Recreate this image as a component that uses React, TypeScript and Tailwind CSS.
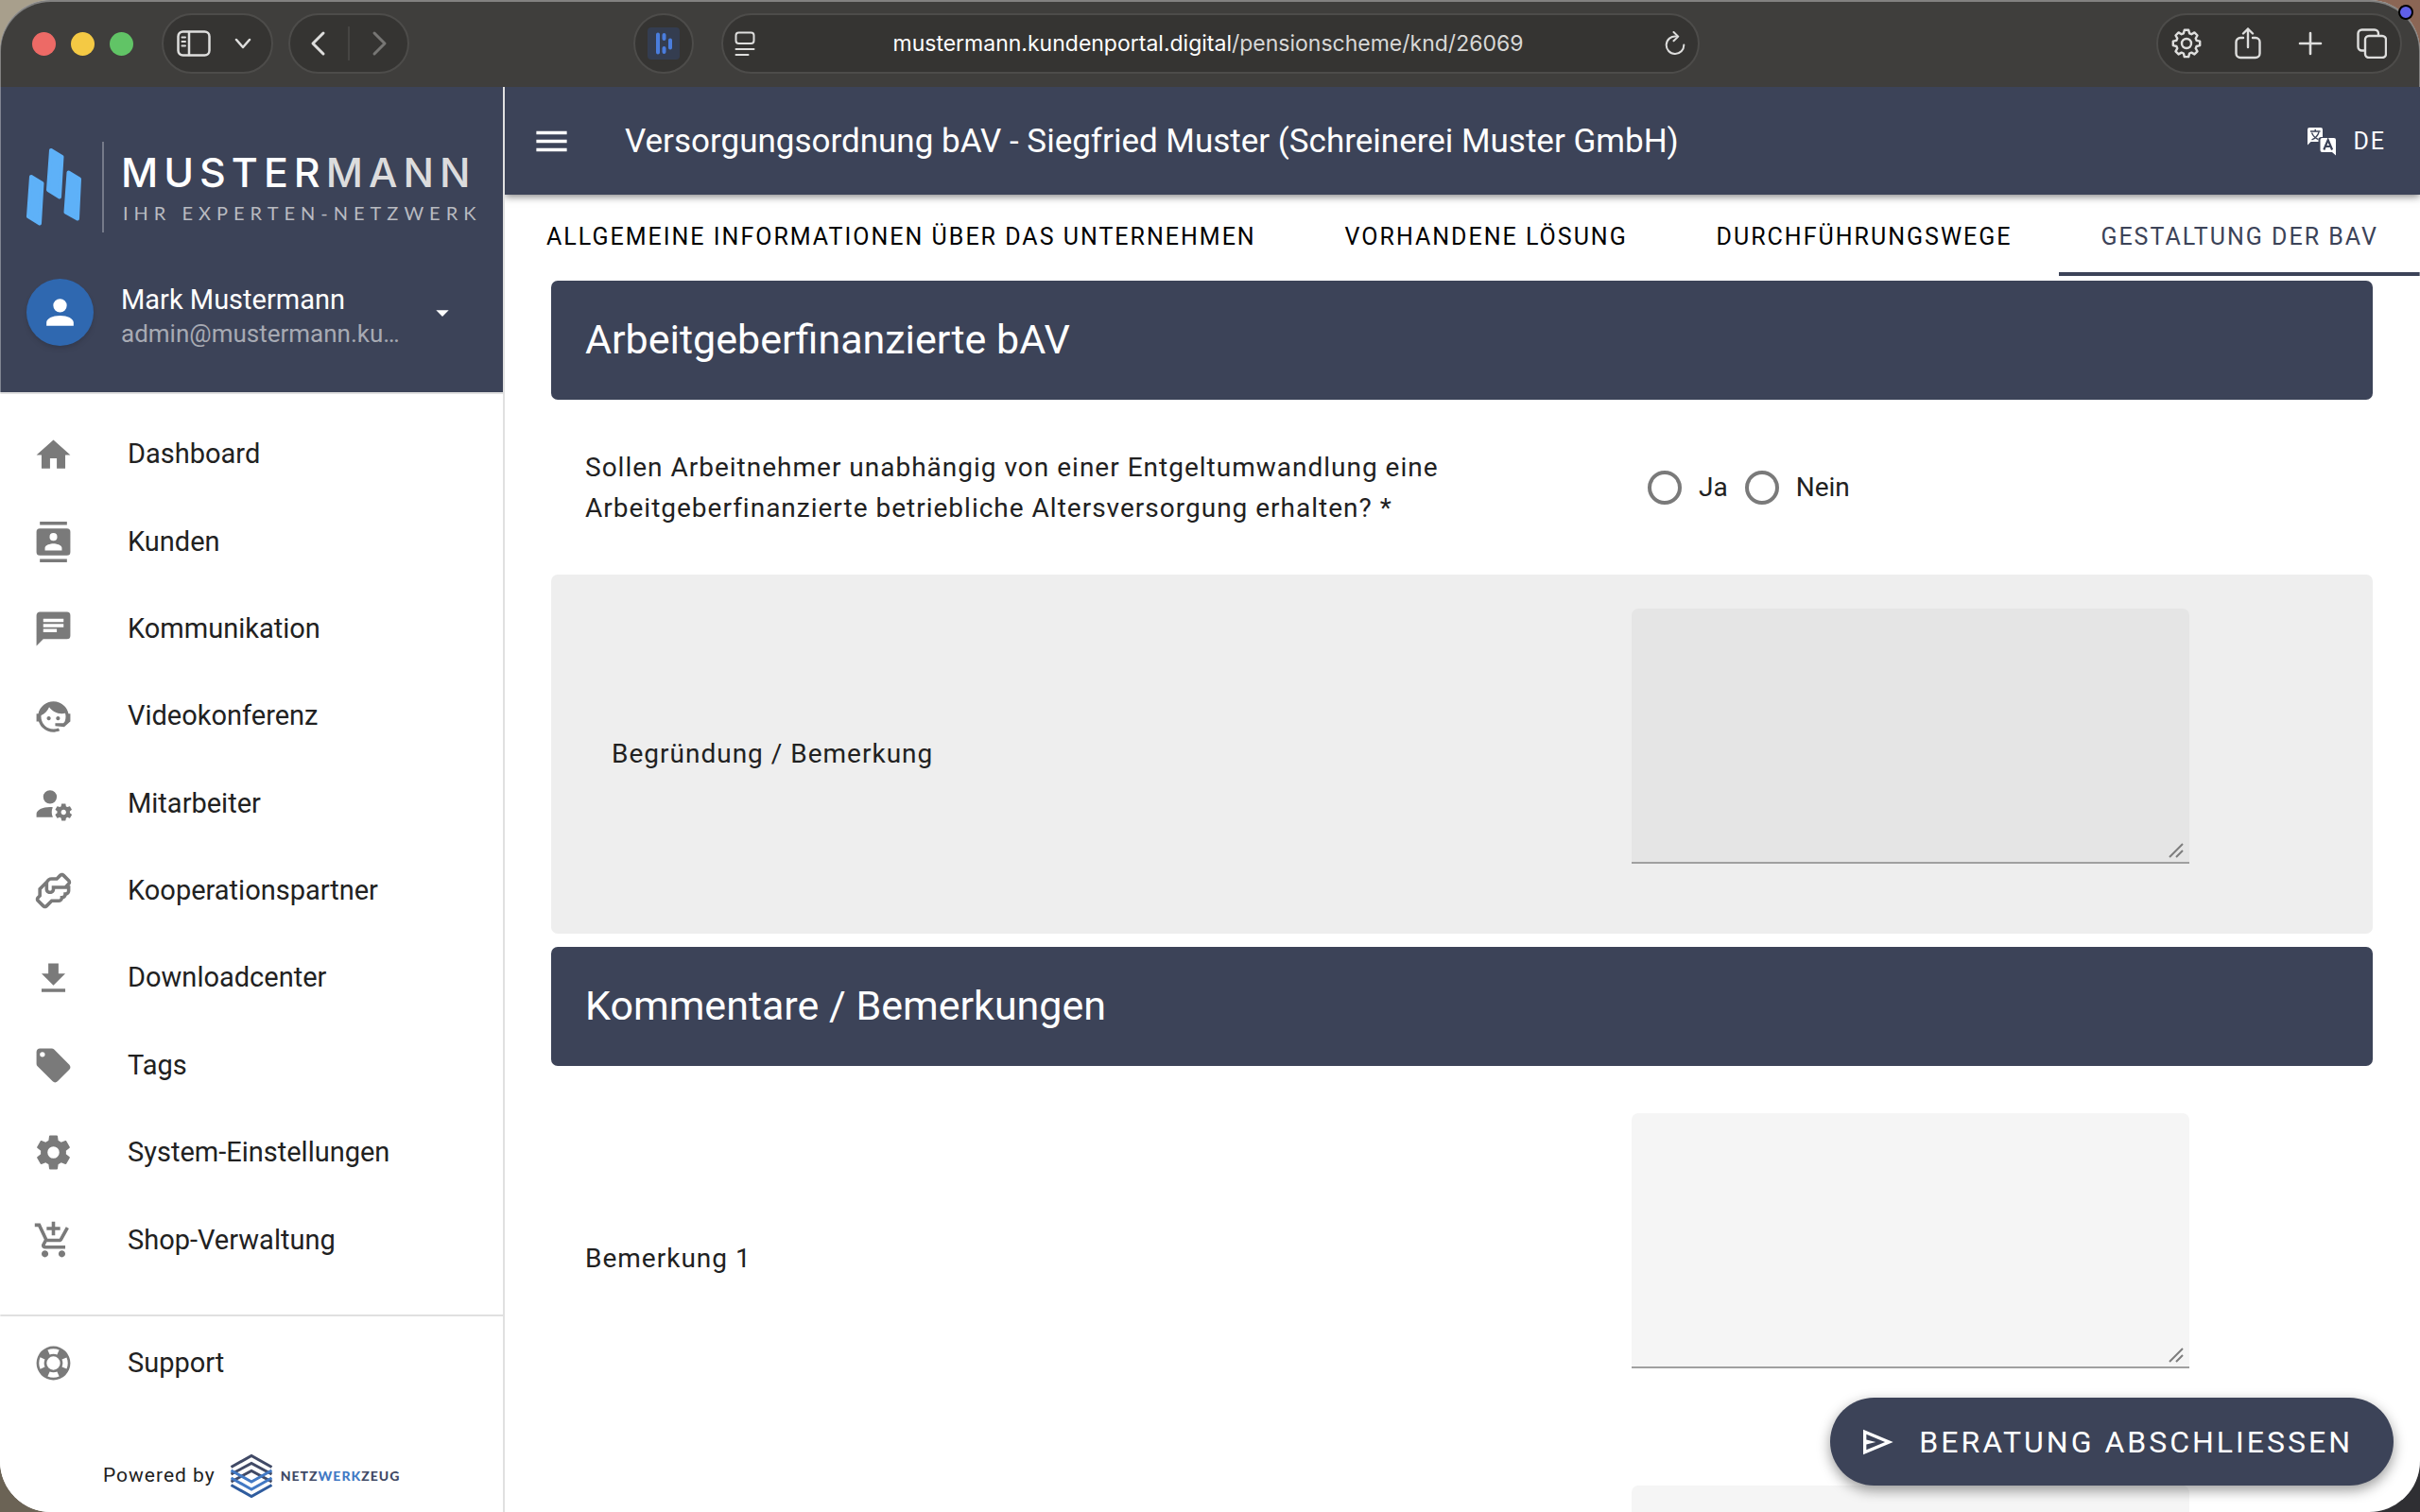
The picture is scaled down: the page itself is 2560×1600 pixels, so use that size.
import type { ReactNode } from "react";
import { MdAddShoppingCart } from "react-icons/md";

const ICONS = {
  home: "M10,20V14H14V20H19V12H22L12,3L2,12H5V20H10Z",
  contacts:
    "M20,4H4A2,2 0 0,0 2,6V18A2,2 0 0,0 4,20H20A2,2 0 0,0 22,18V6A2,2 0 0,0 20,4M4,0H20V2H4V0M4,24H20V22H4V24M12,6.75A2.25,2.25 0 0,1 14.25,9A2.25,2.25 0 0,1 12,11.25A2.25,2.25 0 0,1 9.75,9A2.25,2.25 0 0,1 12,6.75M17,17H7V15.5C7,13.83 10.33,13 12,13C13.67,13 17,13.83 17,15.5V17Z",
  message:
    "M20,2A2,2 0 0,1 22,4V16A2,2 0 0,1 20,18H6L2,22V4C2,2.89 2.9,2 4,2H20M6,6V8H18V6H6M6,9V11H18V9H6M6,12V14H14V12H6Z",
  agent:
    "M18.72,14.76C19.07,13.91 19.26,13 19.26,12C19.26,11.28 19.15,10.59 18.96,9.95C18.31,10.1 17.63,10.18 16.92,10.18C13.86,10.18 11.15,8.67 9.5,6.34C8.61,8.5 6.91,10.26 4.77,11.22C4.73,11.47 4.73,11.74 4.73,12A7.27,7.27 0 0,0 12,19.27C13.05,19.27 14.06,19.04 14.97,18.63C15.54,19.72 15.8,20.26 15.78,20.26C14.14,20.81 12.87,21.08 12,21.08C9.58,21.08 7.27,20.13 5.57,18.42C4.53,17.38 3.76,16.11 3.33,14.73H2V10.18H3.09C3.93,6.04 7.6,2.92 12,2.92C14.4,2.92 16.71,3.87 18.42,5.58C19.69,6.84 20.54,8.45 20.89,10.18H22V14.73H21.94L18.38,18L13.08,17.4V15.73H17.91L18.72,14.76M9.27,11.77A1.14,1.14 0 1,1 9.26,11.77M14.72,11.77A1.14,1.14 0 1,1 14.71,11.77Z",
  accountCog:
    "M10 4A4 4 0 0 0 6 8A4 4 0 0 0 10 12A4 4 0 0 0 14 8A4 4 0 0 0 10 4M17 12C16.87 12 16.76 12.09 16.74 12.21L16.55 13.53C16.25 13.66 15.96 13.82 15.7 14L14.46 13.5C14.35 13.5 14.22 13.5 14.15 13.63L13.15 15.36C13.09 15.47 13.11 15.6 13.21 15.68L14.27 16.5C14.25 16.67 14.24 16.83 14.24 17C14.24 17.17 14.25 17.33 14.27 17.5L13.21 18.32C13.12 18.4 13.09 18.53 13.15 18.64L14.15 20.37C14.21 20.5 14.34 20.5 14.46 20.5L15.7 20C15.96 20.18 16.24 20.35 16.55 20.47L16.74 21.79C16.76 21.91 16.86 22 17 22H19C19.11 22 19.22 21.91 19.24 21.79L19.43 20.47C19.73 20.34 20 20.18 20.27 20L21.5 20.5C21.63 20.5 21.76 20.5 21.83 20.37L22.83 18.64C22.89 18.53 22.86 18.4 22.77 18.32L21.7 17.5C21.72 17.33 21.74 17.17 21.74 17C21.74 16.83 21.73 16.67 21.7 16.5L22.76 15.68C22.85 15.6 22.88 15.47 22.82 15.36L21.82 13.63C21.76 13.5 21.63 13.5 21.5 13.5L20.27 14C20 13.82 19.73 13.65 19.42 13.53L19.23 12.21C19.22 12.09 19.11 12 19 12H17M10 14C5.58 14 2 15.79 2 18V20H11.68A7 7 0 0 1 11 17A7 7 0 0 1 11.64 14.09C11.11 14.03 10.56 14 10 14M18 15.5C18.83 15.5 19.5 16.17 19.5 17C19.5 17.83 18.83 18.5 18 18.5C17.16 18.5 16.5 17.83 16.5 17C16.5 16.17 17.17 15.5 18 15.5Z",
  handshake:
    "M21.71 8.71C22.96 7.46 22.39 6 21.71 5.29L18.72 2.29C17.45 1.04 16 1.61 15.29 2.29L13.59 4H11C9.1 4 8 5 7.44 6.15L3 10.59V14.59L2.29 15.29C1.04 16.55 1.61 18 2.29 18.71L5.29 21.71C5.83 22.25 6.41 22.45 6.96 22.45C7.67 22.45 8.32 22.1 8.71 21.71L11.41 19H15C16.7 19 17.56 17.94 17.87 16.9C19 16.6 19.62 15.74 19.87 14.9C21.42 14.5 22 13.03 22 12V9H21.41L21.71 8.71M20 12C20 12.45 19.81 13 19 13L18 13L18 14C18 14.45 17.81 15 17 15L16 15L16 16C16 16.45 15.81 17 15 17H10.59L7.31 20.28C7 20.57 6.82 20.4 6.71 20.29L3.72 17.31C3.43 17 3.6 16.82 3.71 16.71L5 15.41V11.41L7 9.41V11C7 12.21 7.8 14 10 14S13 12.21 13 11H20V12M20.29 7.29L18.59 9H11V11C11 11.45 10.81 12 10 12S9 11.45 9 11V8C9 7.54 9.17 6 11 6H14.41L16.69 3.72C17 3.43 17.18 3.6 17.29 3.71L20.28 6.69C20.57 7 20.4 7.18 20.29 7.29Z",
  download: "M5,20H19V18H5M19,9H15V3H9V9H5L12,16L19,9Z",
  tag: "M5.5,7A1.5,1.5 0 0,1 4,5.5A1.5,1.5 0 0,1 5.5,4A1.5,1.5 0 0,1 7,5.5A1.5,1.5 0 0,1 5.5,7M21.41,11.58L12.41,2.58C12.05,2.22 11.55,2 11,2H4C2.89,2 2,2.89 2,4V11C2,11.55 2.22,12.05 2.59,12.41L11.58,21.41C11.95,21.77 12.45,22 13,22C13.55,22 14.05,21.77 14.41,21.41L21.41,14.41C21.78,14.05 22,13.55 22,13C22,12.44 21.77,11.94 21.41,11.58Z",
  cog: "M12,15.5A3.5,3.5 0 0,1 8.5,12A3.5,3.5 0 0,1 12,8.5A3.5,3.5 0 0,1 15.5,12A3.5,3.5 0 0,1 12,15.5M19.43,12.97C19.47,12.65 19.5,12.33 19.5,12C19.5,11.67 19.47,11.34 19.43,11L21.54,9.37C21.73,9.22 21.78,8.95 21.66,8.73L19.66,5.27C19.54,5.05 19.27,4.96 19.05,5.05L16.56,6.05C16.04,5.66 15.5,5.32 14.87,5.07L14.5,2.42C14.46,2.18 14.25,2 14,2H10C9.75,2 9.54,2.18 9.5,2.42L9.13,5.07C8.5,5.32 7.96,5.66 7.44,6.05L4.95,5.05C4.73,4.96 4.46,5.05 4.34,5.27L2.34,8.73C2.21,8.95 2.27,9.22 2.46,9.37L4.57,11C4.53,11.34 4.5,11.67 4.5,12C4.5,12.33 4.53,12.65 4.57,12.97L2.46,14.63C2.27,14.78 2.21,15.05 2.34,15.27L4.34,18.73C4.46,18.95 4.73,19.03 4.95,18.95L7.44,17.94C7.96,18.34 8.5,18.68 9.13,18.93L9.5,21.58C9.54,21.82 9.75,22 10,22H14C14.25,22 14.46,21.82 14.5,21.58L14.87,18.93C15.5,18.67 16.04,18.34 16.56,17.94L19.05,18.95C19.27,19.03 19.54,18.95 19.66,18.73L21.66,15.27C21.78,15.05 21.73,14.78 21.54,14.63L19.43,12.97Z",
  lifebuoy:
    "M19.79,15.41C20.74,13.24 20.74,10.75 19.79,8.59L17.05,9.83C17.65,11.21 17.65,12.78 17.06,14.17L19.79,15.41M15.42,4.21C13.25,3.26 10.76,3.26 8.59,4.21L9.83,6.94C11.22,6.35 12.79,6.35 14.18,6.95L15.42,4.21M4.21,8.58C3.26,10.76 3.26,13.24 4.21,15.42L6.95,14.17C6.35,12.79 6.35,11.21 6.95,9.82L4.21,8.58M8.59,19.79C10.76,20.74 13.25,20.74 15.42,19.78L14.18,17.05C12.8,17.65 11.22,17.65 9.84,17.06L8.59,19.79M12,2A10,10 0 0,1 22,12A10,10 0 0,1 12,22A10,10 0 0,1 2,12A10,10 0 0,1 12,2M12,8A4,4 0 0,0 8,12A4,4 0 0,0 12,16A4,4 0 0,0 16,12A4,4 0 0,0 12,8Z",
  account:
    "M12,4A4,4 0 0,1 16,8A4,4 0 0,1 12,12A4,4 0 0,1 8,8A4,4 0 0,1 12,4M12,14C16.42,14 20,15.79 20,18V20H4V18C4,15.79 7.58,14 12,14Z",
  menu: "M3,6H21V8H3V6M3,11H21V13H3V11M3,16H21V18H3V16Z",
  menuDown: "M7,10L12,15L17,10H7Z",
  send: "M3,20V4L22,12L3,20M5,17L16.85,12L5,7V10.5L11,12L5,13.5V17Z",
};

function Icon({ d, className }: { d: string; className: string }) {
  return (
    <svg viewBox="0 0 24 24" className={className} fill="currentColor" fillRule="evenodd" aria-hidden>
      <path d={d} />
    </svg>
  );
}

const NAV_ITEMS = [
  { label: "Dashboard", icon: ICONS.home },
  { label: "Kunden", icon: ICONS.contacts },
  { label: "Kommunikation", icon: ICONS.message },
  { label: "Videokonferenz", icon: ICONS.agent },
  { label: "Mitarbeiter", icon: ICONS.accountCog },
  { label: "Kooperationspartner", icon: ICONS.handshake },
  { label: "Downloadcenter", icon: ICONS.download },
  { label: "Tags", icon: ICONS.tag },
  { label: "System-Einstellungen", icon: ICONS.cog },
  { label: "Shop-Verwaltung", icon: null },
];

const TABS = [
  "Allgemeine Informationen über das Unternehmen",
  "Vorhandene Lösung",
  "Durchführungswege",
  "Gestaltung der bAV",
];

function ChromePill({ children, className }: { children: ReactNode; className: string }) {
  return (
    <div className={`flex h-16 items-center rounded-full border-2 border-[#4d4c4a] bg-[#353432] ${className}`}>
      {children}
    </div>
  );
}

function BrowserBar() {
  return (
    <div className="grid h-[92px] shrink-0 grid-cols-[1fr_auto_1fr] items-center bg-[#3f3e3c] text-[#dededd]">
      <div className="flex items-center pl-[34px]">
        <div className="flex gap-4">
          <span className="size-[25px] rounded-full bg-[#ed6a66]" />
          <span className="size-[25px] rounded-full bg-[#f4c944]" />
          <span className="size-[25px] rounded-full bg-[#61c466]" />
        </div>
        <ChromePill className="ml-[30px] w-[118px] justify-between pr-5 pl-3.5">
          <button aria-label="Seitenleiste">
            <svg viewBox="0 0 36 28" className="block h-7 w-9" fill="none" stroke="currentColor" strokeWidth="2.5" strokeLinecap="round">
              <rect x="1.5" y="1.5" width="33" height="25" rx="5" />
              <path d="M13 2v24" />
              <path d="M5.5 7.5h3.5M5.5 12h3.5M5.5 16.5h3.5" strokeWidth="2" />
            </svg>
          </button>
          <button aria-label="Tabgruppen">
            <svg viewBox="0 0 20 12" className="block h-3 w-5" fill="none" stroke="currentColor" strokeWidth="2.5" strokeLinecap="round" strokeLinejoin="round">
              <path d="M3 2l7 8 7-8" />
            </svg>
          </button>
        </ChromePill>
        <ChromePill className="ml-4 w-32 justify-between px-5">
          <button aria-label="Zurück">
            <svg viewBox="0 0 18 28" className="block h-7 w-[18px]" fill="none" stroke="currentColor" strokeWidth="3" strokeLinecap="round" strokeLinejoin="round">
              <path d="M15 3L4 14l11 11" />
            </svg>
          </button>
          <span className="h-9 w-0.5 bg-[#464543]" />
          <button aria-label="Vorwärts" className="text-[#777674]">
            <svg viewBox="0 0 18 28" className="block h-7 w-[18px]" fill="none" stroke="currentColor" strokeWidth="3" strokeLinecap="round" strokeLinejoin="round">
              <path d="M3 3l11 11L3 25" />
            </svg>
          </button>
        </ChromePill>
        <ChromePill className="mr-[29px] ml-auto w-16 justify-center">
          <svg viewBox="0 0 34 34" className="size-[34px]" aria-hidden>
            <rect width="34" height="34" rx="4" fill="#343d50" />
            <path d="M11 7.5v19M17.5 8v4M17.5 22v4M24 13.5v8" stroke="#4a7ddd" strokeWidth="4" strokeLinecap="round" />
          </svg>
        </ChromePill>
      </div>
      <ChromePill className="w-[1035px] justify-between px-3">
        <svg viewBox="0 0 22 26" className="h-[26px] w-[22px]" fill="none" stroke="currentColor" strokeWidth="2" strokeLinecap="round" aria-hidden>
          <rect x="1.5" y="1.5" width="19" height="11.5" rx="3" />
          <path d="M1.5 19h19M1.5 25h13" />
        </svg>
        <span className="font-['Inter',sans-serif] text-[23px] text-[#d8d8d7]">
          <span className="text-white">mustermann.kundenportal.digital</span>/pensionscheme/knd/26069
        </span>
        <button aria-label="Neu laden" className="pl-1">
          <svg viewBox="0 0 22 26" className="block h-[26px] w-[22px]" fill="none" stroke="currentColor" strokeWidth="2" strokeLinecap="round" strokeLinejoin="round">
            <path d="M12 5.5A9.3 9.3 0 1 0 20.3 14.5" />
            <path d="M9.5 1l4.8 4.6-4.8 4.6" />
          </svg>
        </button>
      </ChromePill>
      <ChromePill className="mr-[19px] w-[260px] justify-between justify-self-end px-[14px]">
        <button aria-label="Einstellungen">
          <svg viewBox="0 0 32 32" className="block size-8" fill="none" stroke="currentColor" strokeWidth="2.4" strokeLinejoin="round">
            <path d="M13.800 1.800h4.400l.9 3.500 2.200.9 3.100-1.800 3.100 3.100-1.800 3.100.9 2.200 3.600.9v4.400l-3.600.9-.9 2.200 1.800 3.100-3.100 3.100-3.100-1.800-2.200.9-.9 3.600h-4.400l-.9-3.600-2.200-.9-3.100 1.800-3.100-3.100 1.800-3.100-.9-2.200-3.600-.9v-4.400l3.600-.9.9-2.200-1.800-3.100 3.100-3.100 3.100 1.800 2.200-.9z" />
            <circle cx="16" cy="16" r="5" />
          </svg>
        </button>
        <button aria-label="Teilen">
          <svg viewBox="0 0 32 34" className="block h-[34px] w-8" fill="none" stroke="currentColor" strokeWidth="2.4" strokeLinecap="round" strokeLinejoin="round">
            <path d="M11 11H8a4.500 4.500 0 0 0-4.500 4.500v12A4.500 4.500 0 0 0 8 32h16a4.500 4.500 0 0 0 4.500-4.500v-12A4.500 4.500 0 0 0 24 11h-3" />
            <path d="M16 21V1.500M11 6.500l5-5 5 5" />
          </svg>
        </button>
        <button aria-label="Neuer Tab">
          <svg viewBox="0 0 32 32" className="block size-8" fill="none" stroke="currentColor" strokeWidth="2.6" strokeLinecap="round">
            <path d="M16 5v22M5 16h22" />
          </svg>
        </button>
        <button aria-label="Tabübersicht">
          <svg viewBox="0 0 32 32" className="block size-8" fill="none" stroke="currentColor" strokeWidth="2.4" strokeLinejoin="round">
            <rect x="9" y="8" width="22" height="23" rx="4" />
            <path d="M8 23.500H5.500a4 4 0 0 1-4-4v-14a4 4 0 0 1 4-4H19a4 4 0 0 1 4 4V8" />
          </svg>
        </button>
      </ChromePill>
    </div>
  );
}

function Logo() {
  return (
    <div className="flex h-24 items-center">
      <svg viewBox="0 0 58 84" className="h-[84px] w-[58px]" fill="#5eb1f8" stroke="#5eb1f8" strokeWidth="4" strokeLinejoin="round" aria-hidden>
        <path d="M5 31l11.500 7L14 80.500 2 73z" />
        <path d="M26 3l11.500 7L35 52.500 23 45z" />
        <path d="M44.500 26.500L56 33.500l-2 42L41.500 68.500z" />
      </svg>
      <span className="ml-[22px] h-24 w-0.5 bg-[#757a89]" />
      <div className="ml-[18px] pt-2 text-[#dcdcdd]">
        <p className="font-['Inter',sans-serif] text-[43px] leading-[46px] font-medium tracking-[6px]">
          <span className="text-white">MUSTER</span>MANN
        </p>
        <p className="pl-0.5 font-['Lato',sans-serif] text-[20px] leading-10 tracking-[6px] text-[#b9bbc1]">
          IHR EXPERTEN-NETZWERK
        </p>
      </div>
    </div>
  );
}

function NavLink({ label, children }: { label: string; children: ReactNode }) {
  return (
    <a href="#" className="flex items-center gap-[57px] pl-[35px] text-[29px] text-[#212121]">
      <span className="text-[#7a7a7a]">{children}</span>
      {label}
    </a>
  );
}

function Sidebar() {
  return (
    <aside className="flex w-[534px] shrink-0 flex-col border-r-2 border-[#e0e0e0] bg-white">
      <div className="flex h-[325px] flex-col gap-[49px] border-b-2 border-[#e0e0e0] bg-[#3c4358] pt-[58px] pl-7">
        <Logo />
        <button className="flex h-[71px] items-center text-left text-white">
          <span className="flex size-[71px] items-center justify-center rounded-full bg-[#2f68b0] shadow-md">
            <Icon d={ICONS.account} className="size-[43px]" />
          </span>
          <span className="ml-[29px] flex flex-col pt-2">
            <span className="text-[29px] leading-9">Mark Mustermann</span>
            <span className="text-[26px] leading-9 text-[#a7aab3]">admin@mustermann.ku…</span>
          </span>
          <Icon d={ICONS.menuDown} className="mr-12 ml-auto size-8" />
        </button>
      </div>
      <nav className="flex flex-1 flex-col pt-[18px] pb-8">
        <ul className="flex flex-1 flex-col">
          {NAV_ITEMS.map((item) => (
            <li key={item.label} className="flex flex-1 flex-col justify-center">
              <NavLink label={item.label}>
                {item.icon ? (
                  <Icon d={item.icon} className="size-[43px]" />
                ) : (
                  <MdAddShoppingCart className="size-[43px]" />
                )}
              </NavLink>
            </li>
          ))}
        </ul>
      </nav>
      <div className="border-t-2 border-[#e0e0e0] pt-7">
        <NavLink label="Support">
          <Icon d={ICONS.lifebuoy} className="size-[43px]" />
        </NavLink>
      </div>
      <div className="flex items-center pt-[74px] pb-3.5 pl-[109px]">
        <span className="text-[21px] tracking-[1px] text-[#212121]">Powered by</span>
        <svg viewBox="0 0 46 48" className="ml-[15px] h-12 w-[46px]" fill="none" strokeWidth="3" aria-hidden>
          <path d="M1.500 14.500L23 2.500l21.500 12M1.500 22L23 10.500 44.500 22M1.500 30L23 18.500 44.500 30" stroke="#414a66" />
          <path d="M1.500 18L23 30l21.500-12M1.500 26L23 38l21.500-12" stroke="#4279c4" />
          <path d="M1.500 33.500L23 45.500l21.500-12" stroke="#2f5c9e" />
        </svg>
        <span className="ml-2 font-['Lato',sans-serif] text-sm font-black tracking-[1px] text-[#414a66]">
          NETZ<span className="text-[#4279c4]">WERK</span>ZEUG
        </span>
      </div>
    </aside>
  );
}

function SectionTitle({ children }: { children: ReactNode }) {
  return (
    <h2 className="flex h-[126px] shrink-0 items-center rounded-[7px] bg-[#3c4358] px-9 pb-0.5 text-[43px] text-white">
      {children}
    </h2>
  );
}

function NoteRow({ id, label, shaded }: { id: string; label?: string; shaded?: boolean }) {
  return (
    <div
      className={`flex items-center justify-end rounded-[7px] pt-9 pr-[194px] pb-[74px] ${
        shaded ? "bg-[#eeeeee] pl-16" : "pl-9"
      }`}
    >
      {label && (
        <label htmlFor={id} className="mt-[38px] flex-1 text-[28px] tracking-[1px]">
          {label}
        </label>
      )}
      <div className="relative w-[590px]">
        <textarea
          id={id}
          aria-label={label ? undefined : "Weitere Bemerkung"}
          className={`block h-[270px] w-full resize-none rounded-t-[7px] border-b-2 border-[#a0a0a0] p-5 text-[28px] outline-none ${
            shaded ? "bg-[#e5e5e5]" : "bg-[#f5f5f5]"
          }`}
        />
        <svg viewBox="0 0 16 16" className="absolute right-1.5 bottom-1.5 size-4" stroke="#7d7d7d" strokeWidth="2" aria-hidden>
          <path d="M1 15L15 1M8 15l7-7" />
        </svg>
      </div>
    </div>
  );
}

function RadioOption({ label }: { label: string }) {
  return (
    <label className="flex items-center gap-[18px] text-[28px]">
      <input
        type="radio"
        name="arbeitgeberfinanziert"
        className="size-9 appearance-none rounded-full border-4 border-[#7a7a7a] checked:border-[10px]"
      />
      {label}
    </label>
  );
}

function TopBar() {
  return (
    <header className="relative z-10 flex h-[114px] shrink-0 items-center bg-[#3c4358] px-7 text-white shadow-[0_2px_8px_rgba(0,0,0,0.5)]">
      <button aria-label="Menü">
        <Icon d={ICONS.menu} className="block size-[43px]" />
      </button>
      <h1 className="ml-14 flex-1 pt-0.5 text-[35px]">
        Versorgungsordnung bAV - Siegfried Muster (Schreinerei Muster GmbH)
      </h1>
      <button className="mr-2 flex items-center gap-[18px] pt-0.5 text-[25px] tracking-[2px]">
        <svg viewBox="0 0 30 30" className="size-[30px]" aria-hidden>
          <path d="M2 0h12a2 2 0 0 1 2 2v8h-1.500a3 3 0 0 0-3 3v2H3.500L0 18.500V2a2 2 0 0 1 2-2z" fill="#fff" />
          <path d="M3 4h10.500M8.200 1.800V4M4.500 5.500C6 9 8.500 11.500 11.500 12.500M12 5C10.800 8.800 8 11.500 4.500 12.800" stroke="#3c4358" strokeWidth="1.4" fill="none" />
          <path d="M15.500 11H28a2 2 0 0 1 2 2v16.500L26 26H15.500a2 2 0 0 1-2-2V13a2 2 0 0 1 2-2z" fill="#fff" />
          <path d="M17.300 23.500L21.700 13l4.400 10.500M18.800 20h5.800" stroke="#3c4358" strokeWidth="2.2" fill="none" />
        </svg>
        DE
      </button>
    </header>
  );
}

export default function App() {
  return (
    <div className="relative h-screen overflow-hidden bg-[conic-gradient(#8b6655_25%,#2f2f33_25%_50%,#6b6355_50%_75%,#a89f8c_75%)] font-['Roboto',sans-serif] text-[#212121]">
      <div className="flex h-full flex-col overflow-hidden rounded-[54px] bg-white">
        <BrowserBar />
        <div className="flex min-h-0 flex-1">
          <Sidebar />
          <main className="flex min-w-0 flex-1 flex-col overflow-hidden">
            <TopBar />
            <div role="tablist" className="flex h-[86px] shrink-0 justify-between">
              {TABS.map((tab, i) => (
                <button
                  key={tab}
                  role="tab"
                  aria-selected={i === 3}
                  className={`border-b-4 px-11 pt-2 text-[25px] tracking-[2px] uppercase ${
                    i === 3 ? "border-[#3c4358] text-[#3c4358]" : "border-transparent text-black"
                  }`}
                >
                  {tab}
                </button>
              ))}
            </div>
            <form className="flex flex-col gap-[14px] pt-[5px] pr-[50px] pl-[49px]">
              <SectionTitle>Arbeitgeberfinanzierte bAV</SectionTitle>
              <fieldset>
                <div className="flex min-h-[157px] items-center pr-[194px] pl-9">
                  <p className="flex-1 text-[28px] leading-[43px] tracking-[1px]">
                    Sollen Arbeitnehmer unabhängig von einer Entgeltumwandlung eine Arbeitgeberfinanzierte betriebliche
                    Altersversorgung erhalten? *
                  </p>
                  <div className="flex w-[590px] gap-[18px] pl-[17px]">
                    <RadioOption label="Ja" />
                    <RadioOption label="Nein" />
                  </div>
                </div>
              </fieldset>
              <NoteRow id="begruendung" label="Begründung / Bemerkung" shaded />
              <SectionTitle>Kommentare / Bemerkungen</SectionTitle>
              <NoteRow id="bemerkung-1" label="Bemerkung 1" />
              <NoteRow id="bemerkung-2" />
            </form>
          </main>
        </div>
      </div>
      <div className="pointer-events-none absolute inset-0 rounded-[54px] border-x border-t-2 border-white/35" />
      <button className="absolute right-7 bottom-7 flex h-[93px] items-center gap-6 rounded-full bg-[#3c4358] pr-[43px] pl-[30px] text-[32px] tracking-[3px] text-white uppercase shadow-[0_5px_14px_rgba(0,0,0,0.4)]">
        <Icon d={ICONS.send} className="size-10" />
        Beratung abschliessen
      </button>
      <span className="absolute top-[5px] right-[7px] size-4 rounded-full border-2 border-black bg-[#5f5fe8]" />
    </div>
  );
}
